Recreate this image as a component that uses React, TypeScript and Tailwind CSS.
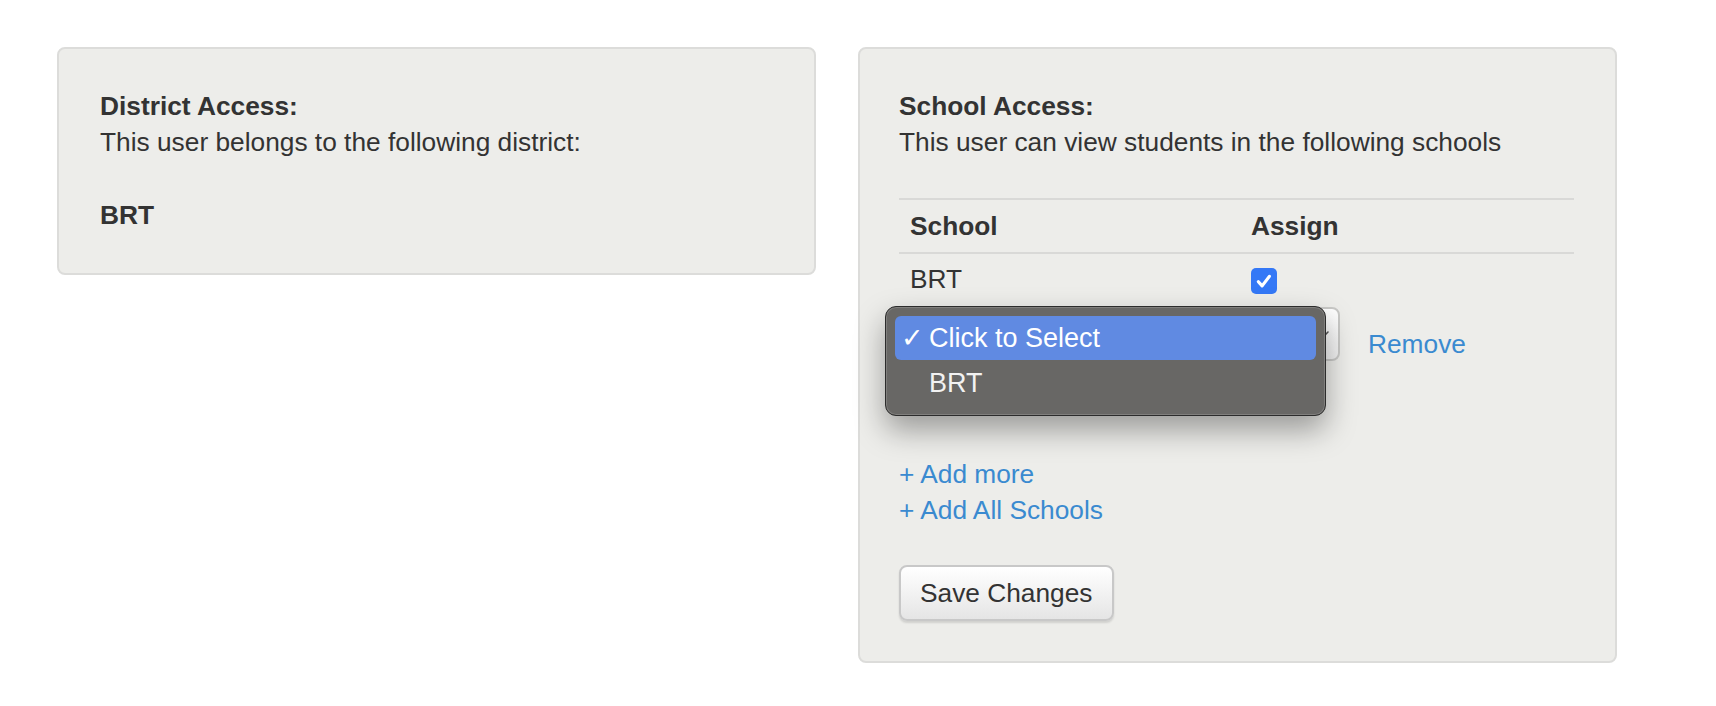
import React from "react";

function CheckIcon() {
  return (
    <svg viewBox="0 0 16 16" className="h-[20px] w-[20px]" fill="none">
      <path d="M3.5 8.6l3 3.3 5.8-7.6" stroke="white" strokeWidth="2.6" strokeLinecap="round" strokeLinejoin="round" />
    </svg>
  );
}

export default function App() {
  return (
    <div className="min-h-screen bg-white font-['Liberation_Sans',Arial,sans-serif] text-[26.3px] leading-[36px] text-[#333]">
      <div className="flex items-start gap-[42px] pl-[57px] pt-[47px]">
        {/* District panel */}
        <div className="w-[759px] rounded-[8px] border-2 border-[#dcdcda] bg-[#ededea] px-[41px] pt-[39px] pb-[40px]">
          <p className="font-bold">District Access:</p>
          <p>This user belongs to the following district:</p>
          <p className="mt-[37px] font-bold">BRT</p>
        </div>

        {/* School panel */}
        <div className="w-[759px] rounded-[8px] border-2 border-[#dcdcda] bg-[#ededea] pl-[39px] pr-[41px] pt-[39px] pb-[40px]">
          <p className="font-bold">School Access:</p>
          <p>This user can view students in the following schools</p>

          <div className="mt-[38px] border-t-2 border-[#d9d9d7]">
            <div className="grid h-[54px] grid-cols-[341px_1fr] items-center border-b-2 border-[#d9d9d7] px-[11px] font-bold">
              <span>School</span>
              <span>Assign</span>
            </div>
            <div className="grid h-[50px] grid-cols-[341px_1fr] items-center px-[11px]">
              <span>BRT</span>
              <span className="mt-[4px] flex h-[26px] w-[26px] items-center justify-center rounded-[5px] bg-[#3478f6]">
                <CheckIcon />
              </span>
            </div>
          </div>

          {/* select row with open native popup */}
          <div className="relative mt-[3px] flex h-[54px] items-start">
            <div className="flex h-[54px] w-[441px] items-center justify-end rounded-[8px] border-2 border-[#c9c9c7] bg-gradient-to-b from-white to-[#f1f1f1] pr-[8px]">
              <svg viewBox="0 0 12 12" className="h-[12px] w-[12px]" fill="none">
                <path d="M2 4l4 4 4-4" stroke="#555" strokeWidth="1.6" strokeLinecap="round" />
              </svg>
            </div>
            <a className="ml-[28px] mt-[19px] text-[#3a8ad0]">Remove</a>

            <div className="absolute left-[-14px] top-[-1px] z-10 w-[441px] rounded-[11px] border border-[#2c2c2c] bg-[#686765] p-[9px] text-[27px] text-[#f2f2f2] shadow-[inset_0_0_0_1px_rgba(255,255,255,0.16),0_14px_30px_rgba(0,0,0,0.35)]">
              <div className="flex h-[44px] items-center rounded-[6px] bg-[#608ae2] pl-[6px] text-white">
                <span className="w-[28px] font-['DejaVu_Sans',sans-serif] text-[27px]">✓</span>
                <span>Click to Select</span>
              </div>
              <div className="flex h-[46px] items-center pl-[34px]">BRT</div>
            </div>
          </div>

          <div className="mt-[95px] text-[#3a8ad0]">
            <p>+ Add more</p>
            <p>+ Add All Schools</p>
          </div>

          <button className="mt-[37px] h-[56px] rounded-[8px] border-2 border-[#c8c8c8] bg-gradient-to-b from-white to-[#e5e5e5] px-[19px] text-[#333] shadow-[0_2px_2px_rgba(0,0,0,0.12)]">
            Save Changes
          </button>
        </div>
      </div>
    </div>
  );
}
